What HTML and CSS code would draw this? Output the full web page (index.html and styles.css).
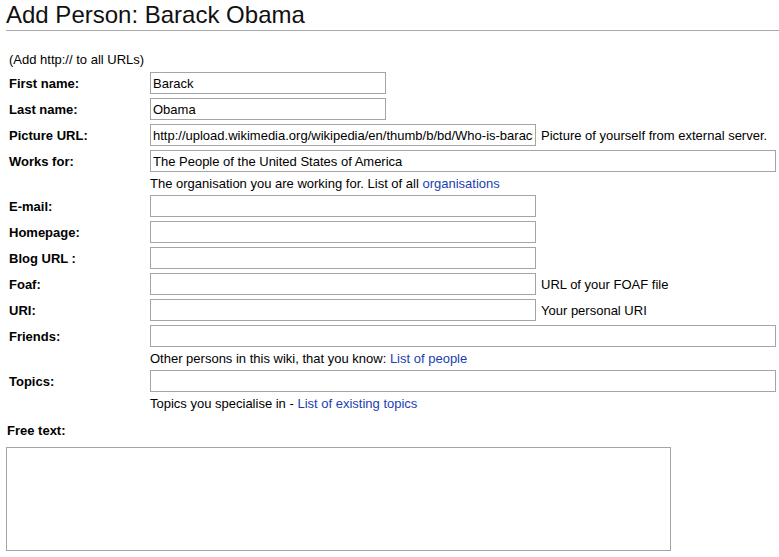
FILE: index.html
```html
<!DOCTYPE html>
<html>

<head>
    <title>Add Person: Barack Obama</title>
    <link rel="stylesheet" href="styles.css">
</head>

<body>
    <h1 class="page-title">Add Person: Barack Obama</h1>

    <form class="person-form">
        <div class="fields">
            <p class="note">(Add http:// to all URLs)</p>

            <label class="field-label">First name:</label>
            <div class="field"><input class="input short" type="text" value="Barack"></div>

            <label class="field-label">Last name:</label>
            <div class="field"><input class="input short" type="text" value="Obama"></div>

            <label class="field-label">Picture URL:</label>
            <div class="field">
                <input class="input medium" type="text" value="http://upload.wikimedia.org/wikipedia/en/thumb/b/bd/Who-is-barack-obama.jpg">
                <span class="hint">Picture of yourself from external server.</span>
            </div>

            <label class="field-label">Works for:</label>
            <div class="field"><input class="input wide" type="text" value="The People of the United States of America"></div>
            <div class="help">The organisation you are working for. List of all <a href="#">organisations</a></div>

            <label class="field-label">E-mail:</label>
            <div class="field"><input class="input medium" type="text"></div>

            <label class="field-label">Homepage:</label>
            <div class="field"><input class="input medium" type="text"></div>

            <label class="field-label">Blog URL :</label>
            <div class="field"><input class="input medium" type="text"></div>

            <label class="field-label">Foaf:</label>
            <div class="field">
                <input class="input medium" type="text">
                <span class="hint">URL of your FOAF file</span>
            </div>

            <label class="field-label">URI:</label>
            <div class="field">
                <input class="input medium" type="text">
                <span class="hint">Your personal URI</span>
            </div>

            <label class="field-label">Friends:</label>
            <div class="field"><input class="input wide" type="text"></div>
            <div class="help">Other persons in this wiki, that you know: <a href="#">List of people</a></div>

            <label class="field-label">Topics:</label>
            <div class="field"><input class="input wide" type="text"></div>
            <div class="help">Topics you specialise in - <a href="#">List of existing topics</a></div>
        </div>

        <label class="free-label">Free text:</label>
        <textarea class="free-text"></textarea>
    </form>
</body>

</html>
```

FILE: styles.css
```css
body {
    margin: 0;
    padding: 0 0 0 6px;
    background: white;
    color: black;
    font-family: "Liberation Sans", Arial, sans-serif;
    font-size: 13px;
}

.page-title {
    margin: 0;
    padding: 3px 0 3px 0;
    font-size: 24px;
    font-weight: normal;
    line-height: 24px;
    color: #111111;
    border-bottom: 1px solid #aaaaaa;
}

.person-form {
    margin-top: 21px;
}

.fields {
    display: grid;
    grid-template-columns: 141px 1fr;
    row-gap: 4px;
    align-items: center;
    padding-left: 3px;
}

.note {
    grid-column: 1 / 3;
    margin: 0 0 1px 0;
    line-height: 15px;
}

.field-label {
    font-weight: bold;
    line-height: 15px;
}

.field {
    display: flex;
    align-items: center;
    gap: 5px;
}

.input {
    box-sizing: border-box;
    height: 22px;
    padding: 0 2px;
    border: 1px solid #a5a5a5;
    font-family: "Liberation Sans", Arial, sans-serif;
    font-size: 13px;
    color: black;
    background: white;
}

.short {
    width: 236px;
}

.medium {
    width: 386px;
}

.wide {
    width: 626px;
}

.hint {
    line-height: 15px;
    white-space: nowrap;
}

.help {
    grid-column: 2;
    line-height: 15px;
}

a {
    color: #1a3fb0;
    text-decoration: none;
}

.free-label {
    display: block;
    margin-top: 12px;
    padding-left: 1px;
    font-weight: bold;
    line-height: 15px;
}

.free-text {
    display: block;
    box-sizing: border-box;
    width: 665px;
    height: 104px;
    margin-top: 9px;
    border: 1px solid #a5a5a5;
    resize: none;
}
```
